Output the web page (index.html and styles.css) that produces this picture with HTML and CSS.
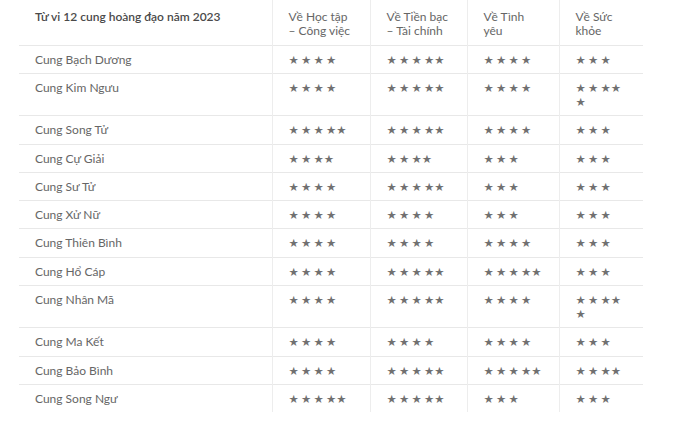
FILE: index.html
```html
<!DOCTYPE html>
<html lang="vi">
<head>
    <meta charset="UTF-8">
    <meta name="viewport" content="width=device-width, initial-scale=1.0">
    <title>Tử vi 12 cung hoàng đạo năm 2023</title>
    <link rel="stylesheet" href="styles.css">
</head>
<body>
    <table class="horoscope">
        <thead>
            <tr>
                <th class="sign-head">Từ vi 12 cung hoàng đạo năm 2023</th>
                <th class="col-study">Về Học tập<br>– Công việc</th>
                <th class="col-money">Về Tiền bạc<br>– Tài chính</th>
                <th class="col-love">Về Tình<br>yêu</th>
                <th class="col-health">Về Sức<br>khỏe</th>
            </tr>
        </thead>
        <tbody>
            <tr><td>Cung Bạch Dương</td><td class="stars">★ ★ ★ ★</td><td class="stars">★ ★ ★ ★★</td><td class="stars">★ ★ ★ ★</td><td class="stars">★ ★ ★</td></tr>
            <tr><td>Cung Kim Ngưu</td><td class="stars">★ ★ ★ ★</td><td class="stars">★ ★ ★ ★★</td><td class="stars">★ ★ ★ ★</td><td class="stars">★ ★ ★★<br>★</td></tr>
            <tr><td>Cung Song Tử</td><td class="stars">★ ★ ★ ★★</td><td class="stars">★ ★ ★ ★★</td><td class="stars">★ ★ ★ ★</td><td class="stars">★ ★ ★</td></tr>
            <tr><td>Cung Cự Giải</td><td class="stars">★ ★ ★★</td><td class="stars">★ ★ ★★</td><td class="stars">★ ★ ★</td><td class="stars">★ ★ ★</td></tr>
            <tr><td>Cung Sư Tử</td><td class="stars">★ ★ ★ ★</td><td class="stars">★ ★ ★ ★★</td><td class="stars">★ ★ ★</td><td class="stars">★ ★ ★</td></tr>
            <tr><td>Cung Xử Nữ</td><td class="stars">★ ★ ★ ★</td><td class="stars">★ ★ ★ ★</td><td class="stars">★ ★ ★</td><td class="stars">★ ★ ★</td></tr>
            <tr><td>Cung Thiên Bình</td><td class="stars">★ ★ ★ ★</td><td class="stars">★ ★ ★ ★</td><td class="stars">★ ★ ★ ★</td><td class="stars">★ ★ ★</td></tr>
            <tr><td>Cung Hổ Cáp</td><td class="stars">★ ★ ★ ★</td><td class="stars">★ ★ ★ ★★</td><td class="stars">★ ★ ★ ★★</td><td class="stars">★ ★ ★</td></tr>
            <tr><td>Cung Nhân Mã</td><td class="stars">★ ★ ★ ★</td><td class="stars">★ ★ ★ ★★</td><td class="stars">★ ★ ★ ★</td><td class="stars">★ ★ ★★<br>★</td></tr>
            <tr><td>Cung Ma Kết</td><td class="stars">★ ★ ★ ★</td><td class="stars">★ ★ ★ ★</td><td class="stars">★ ★ ★ ★</td><td class="stars">★ ★ ★</td></tr>
            <tr><td>Cung Bảo Bình</td><td class="stars">★ ★ ★ ★</td><td class="stars">★ ★ ★ ★★</td><td class="stars">★ ★ ★ ★★</td><td class="stars">★ ★ ★★</td></tr>
            <tr><td>Cung Song Ngư</td><td class="stars">★ ★ ★ ★★</td><td class="stars">★ ★ ★ ★★</td><td class="stars">★ ★ ★</td><td class="stars">★ ★ ★</td></tr>
        </tbody>
    </table>
</body>
</html>
```

FILE: styles.css
```css
body {
    margin: 0;
    padding: 0;
    background-color: #fff;
    font-family: "Lato", "DejaVu Sans", sans-serif;
    font-size: 12px;
    color: #666;
}

.horoscope {
    margin-left: 19px;
    width: 624px;
    border-collapse: collapse;
    table-layout: fixed;
}

.horoscope th,
.horoscope td {
    box-sizing: border-box;
    text-align: left;
    vertical-align: top;
    line-height: 14.25px;
    padding: 7px 6px 6px 16px;
}

.horoscope th {
    font-weight: normal;
    padding-top: 10px;
    padding-bottom: 6px;
}

.horoscope th.sign-head {
    width: 253px;
    font-weight: 600;
    color: #4a4a4a;
}

.col-study { width: 98px; }
.col-money { width: 97px; }
.col-love { width: 92px; }
.col-health { width: 84px; }

.horoscope th + th,
.horoscope td + td {
    border-left: 1px solid #ededed;
}

.horoscope thead tr,
.horoscope tbody tr {
    border-bottom: 1px solid #e8e8e8;
}

.horoscope tbody tr:last-child {
    border-bottom: none;
}

.stars {
    font-family: "DejaVu Sans", sans-serif;
    font-size: 11.5px;
    word-spacing: -1.5px;
    color: #707070;
}
```
